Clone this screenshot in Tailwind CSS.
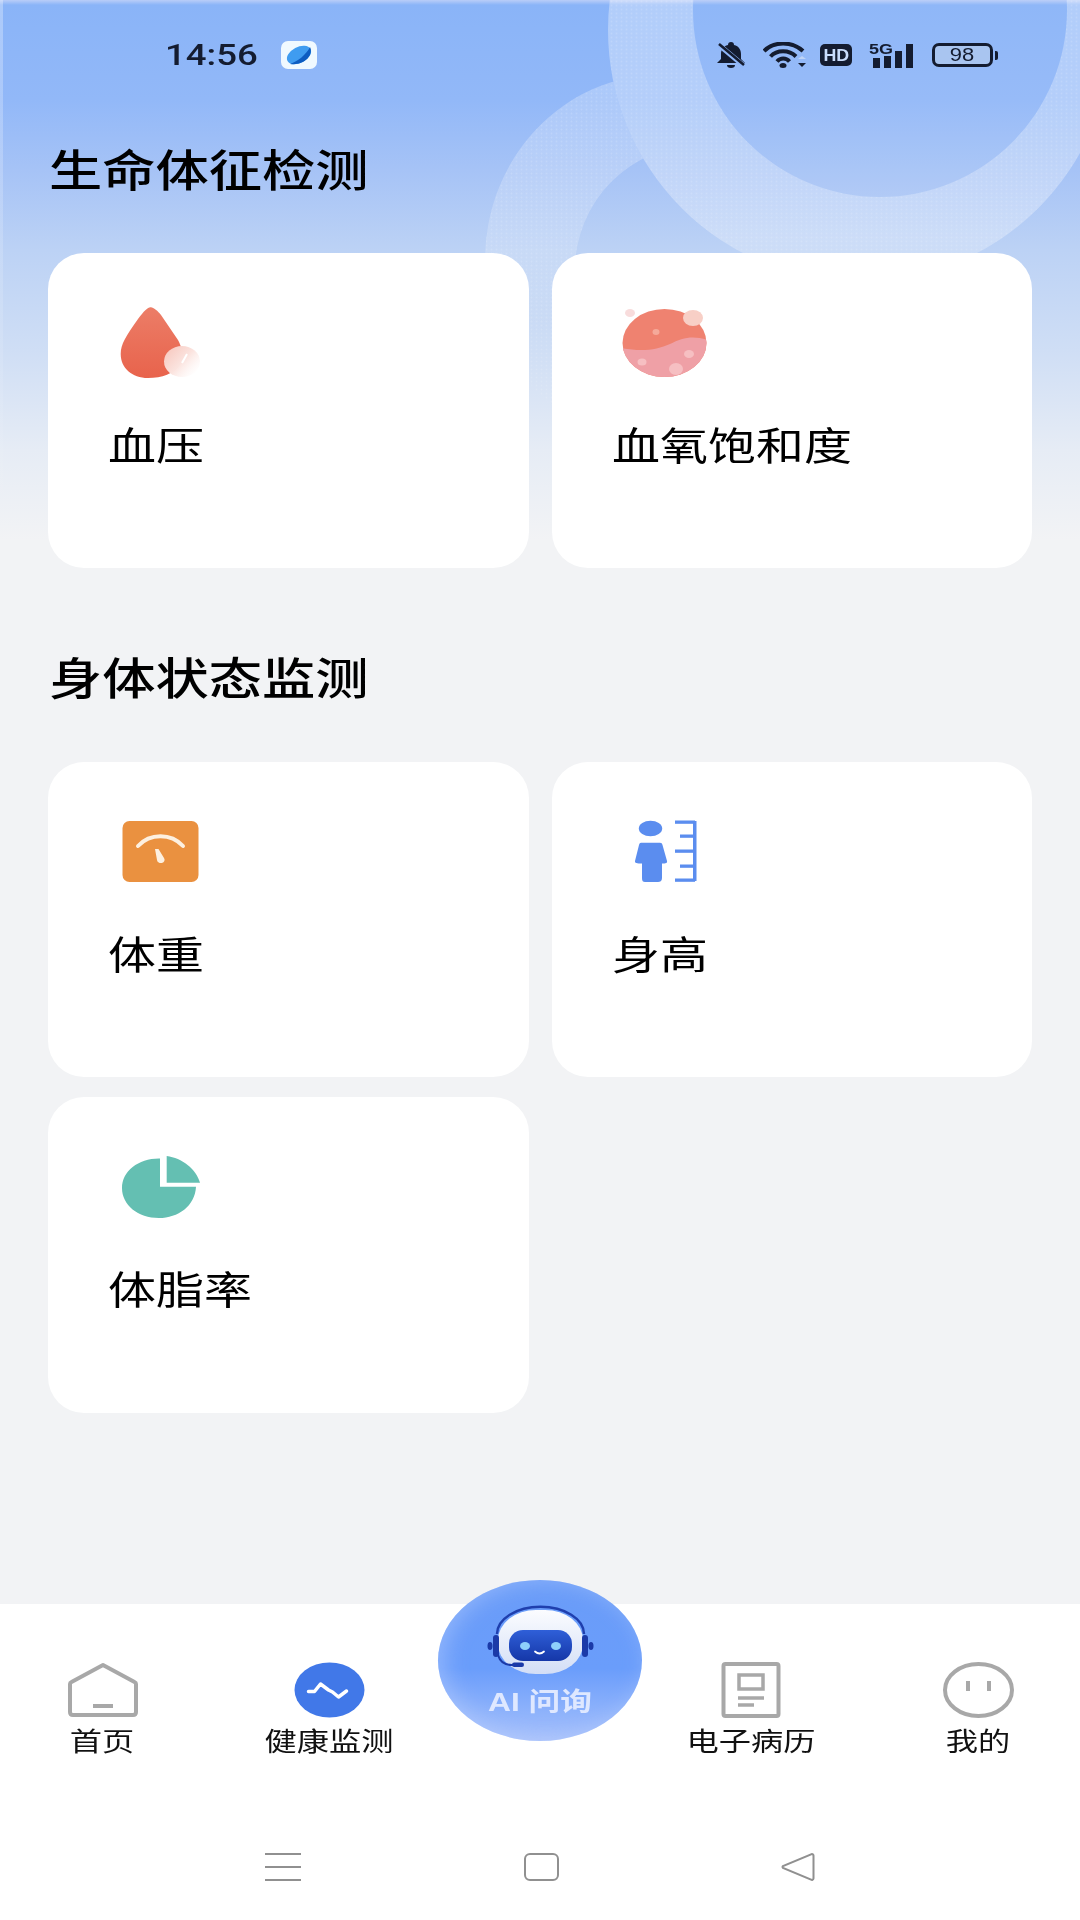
<!DOCTYPE html>
<html lang="zh">
<head>
<meta charset="utf-8">
<script src="https://cdn.jsdelivr.net/npm/@tailwindcss/browser@4"></script>
</head>
<body class="m-0">
<div class="relative w-[1080px] h-[1920px] overflow-hidden flex flex-col bg-[linear-gradient(180deg,#b9cdf8_0,#8ab4f8_5px,#92b8f8_100px,#a6c3f6_170px,#bcd2f5_250px,#cfdef5_350px,#e6ecf5_450px,#f2f3f5_540px)] font-['Noto_Sans_CJK_SC','Noto_Sans',sans-serif] text-black">

  <div class="absolute left-0 top-0 w-[3px] h-[540px] bg-linear-to-b from-white/30 to-white/0"></div>

  <!-- decorative rings -->
  <svg class="absolute left-0 top-0 pointer-events-none" width="1080" height="560" viewBox="0 0 1080 560">
    <defs>
      <mask id="m2"><rect width="1080" height="560" fill="#fff"/><circle cx="860" cy="30" r="252" fill="#000"/></mask>
      <pattern id="dots" width="5" height="4" patternUnits="userSpaceOnUse"><circle cx="1.500" cy="1.500" r=".9" fill="#fff" fill-opacity=".14"/></pattern>
      <linearGradient id="ringfade" gradientUnits="userSpaceOnUse" x1="0" y1="0" x2="0" y2="340"><stop offset="0" stop-color="#fff" stop-opacity=".34"/><stop offset=".7" stop-color="#fff" stop-opacity=".28"/><stop offset="1" stop-color="#fff" stop-opacity="0"/></linearGradient>
      <linearGradient id="ringfade2" gradientUnits="userSpaceOnUse" x1="0" y1="70" x2="0" y2="330"><stop offset="0" stop-color="#fff" stop-opacity=".26"/><stop offset=".7" stop-color="#fff" stop-opacity=".18"/><stop offset="1" stop-color="#fff" stop-opacity="0"/></linearGradient>
    </defs>
    <g mask="url(#m2)">
      <path fill-rule="evenodd" fill="url(#ringfade2)" d="M485 260a175 185 0 1 0 350 0a175 185 0 1 0 -350 0Z M575 270a125 125 0 1 0 250 0a125 125 0 1 0 -250 0Z"/>
      <path fill-rule="evenodd" fill="url(#dots)" d="M485 260a175 185 0 1 0 350 0a175 185 0 1 0 -350 0Z M575 270a125 125 0 1 0 250 0a125 125 0 1 0 -250 0Z"/>
    </g>
    <path fill-rule="evenodd" fill="url(#ringfade)" d="M608 30a252 252 0 1 0 504 0a252 252 0 1 0 -504 0Z M693 10a187 187 0 1 0 374 0a187 187 0 1 0 -374 0Z"/>
    <path fill-rule="evenodd" fill="url(#dots)" d="M608 30a252 252 0 1 0 504 0a252 252 0 1 0 -504 0Z M693 10a187 187 0 1 0 374 0a187 187 0 1 0 -374 0Z"/>
    <path fill="#fff" fill-opacity=".05" d="M693 10a187 187 0 1 0 374 0a187 187 0 1 0 -374 0Z"/>
  </svg>

  <!-- status bar -->
  <div class="relative flex items-center h-[110px] pl-[165px] pr-[82px] text-[#141c30]">
    <span class="font-['Roboto',sans-serif] font-medium text-[30px] leading-none origin-left scale-x-[1.22] w-[116px]">14:56</span>
    <svg width="36" height="28" viewBox="0 0 36 28">
      <rect width="36" height="28" rx="7" fill="#f0f9ff"/>
      <ellipse cx="18" cy="14" rx="13" ry="8" fill="#3f9cf0" transform="rotate(-28 18 14)"/>
      <path d="M9 23C17 20 25 14 29 6C33 14 23 25 9 23Z" fill="#0d5cc0"/>
    </svg>
    <div class="flex-1"></div>
    <svg width="30" height="26" viewBox="0 0 30 26" class="mr-[17px]">
      <path d="M15 0c2 0 3 1 3 3c5 1 7 5 7 9v5l4 4H1l4-4v-5c0-4 2-8 7-9c0-2 1-3 3-3Z" fill="#141c30"/>
      <path d="M11 23h8a4 3 0 0 1-8 0Z" fill="#141c30"/>
      <path d="M3 3L28 24" stroke="#8fb6f8" stroke-width="5"/>
      <path d="M3 2L28 23" stroke="#141c30" stroke-width="2.600"/>
    </svg>
    <svg width="44" height="26" viewBox="0 0 44 26" class="mr-[13px]" fill="none" stroke="#141c30" stroke-width="4">
      <path d="M1 9C11 -1 29 -1 40 9"/>
      <path d="M7.500 14.500C14 7.500 26 7.500 33 14.500"/>
      <path d="M14 19.500C17.500 15.500 23 15.500 26.500 19.500"/>
      <ellipse cx="20" cy="23.500" rx="3.500" ry="2.500" fill="#141c30" stroke="none"/>
      <path d="M35 17l4-3l4 3Z" fill="#c0d4f5" stroke="none"/>
      <path d="M35 21h8l-4 4Z" fill="#141c30" stroke="none"/>
    </svg>
    <span class="flex items-center justify-center w-[32px] h-[22px] rounded-[5px] bg-[#141c30] text-[#c9dcfb] font-['Liberation_Sans',sans-serif] font-bold text-[17px] leading-none mr-[17px]"><span class="scale-x-[1.05]">HD</span></span>
    <div class="relative w-[46px] h-[25px] mr-[17px] flex items-end gap-[4px] pl-[4px]">
      <span class="absolute left-0 top-[-2px] font-['Liberation_Sans',sans-serif] font-bold text-[15px] leading-none origin-left scale-x-[1.2]">5G</span>
      <span class="w-[7px] h-[10px] bg-[#141c30]"></span>
      <span class="w-[7px] h-[12px] bg-[#141c30]"></span>
      <span class="w-[7px] h-[17px] bg-[#141c30]"></span>
      <span class="w-[7px] h-[24px] bg-[#141c30]"></span>
    </div>
    <div class="flex items-center gap-[2px]">
      <span class="flex items-center justify-center w-[61px] h-[24px] rounded-[7px] border-[3px] border-[#141c30] bg-[#a9c5f0] font-['Liberation_Sans',sans-serif] text-[18px] leading-none"><span class="scale-x-[1.22]">98</span></span>
      <span class="w-[3px] h-[9px] bg-[#141c30] rounded-r-[2px]"></span>
    </div>
  </div>

  <!-- content -->
  <main class="relative flex-1 px-[48px]">
    <h2 class="mt-[26px] mb-[53px] ml-[1px] text-[44px] leading-[64px] font-medium origin-left scale-x-[1.21]">生命体征检测</h2>
    <div class="grid grid-cols-[481px_480px] gap-x-[23px]">
      <div class="h-[315px] rounded-[36px] bg-white pl-[60px] pt-[49px]">
        <svg class="block" width="110" height="80" viewBox="0 0 110 80">
          <defs>
            <linearGradient id="drop" x1="0" y1="0" x2="0" y2="1"><stop offset="0" stop-color="#ec7d67"/><stop offset="1" stop-color="#e8634c"/></linearGradient>
            <linearGradient id="bub" x1="0" y1="0" x2="1" y2=".8"><stop offset="0" stop-color="#f7c4ba"/><stop offset=".55" stop-color="#fbe3de"/><stop offset="1" stop-color="#fff" stop-opacity=".4"/></linearGradient>
          </defs>
          <path d="M42.700 5.300C45 5 50 9 53 13L70 38C74 45 76 55 72 62C66 72 54 76 40 76C24 76 12.700 66 12.700 52C12.700 42 18 34 30 17C36 9 40 5 42.700 5.300Z" fill="url(#drop)"/>
          <ellipse cx="74" cy="59.500" rx="18" ry="15.500" fill="url(#bub)"/>
          <path d="M74 61l5-9" stroke="#fff" stroke-width="2"/>
        </svg>
        <div class="mt-[33px] text-[39px] leading-[56px] origin-left scale-x-[1.23]">血压</div>
      </div>
      <div class="h-[315px] rounded-[36px] bg-white pl-[60px] pt-[49px]">
        <svg class="block" width="110" height="80" viewBox="0 0 110 80">
          <defs><clipPath id="o2c"><ellipse cx="52.500" cy="41" rx="42" ry="34"/></clipPath></defs>
          <ellipse cx="52.500" cy="41" rx="42" ry="34" fill="#ef8270"/>
          <path clip-path="url(#o2c)" d="M8 46C30 50 45 48 58 42C70 36 80 33 96 38V80H8Z" fill="#efa0a6"/>
          <ellipse cx="81" cy="16" rx="10" ry="8" fill="#f8cfc6"/>
          <ellipse cx="18" cy="11" rx="5" ry="4" fill="#f8dcdc"/>
          <ellipse cx="44" cy="30" rx="3.500" ry="3" fill="#f5a99a"/>
          <ellipse cx="30" cy="60" rx="4.500" ry="3.500" fill="#f6bfc2"/>
          <ellipse cx="64" cy="67" rx="7" ry="6" fill="#f6bfc2"/>
          <ellipse cx="77" cy="52" rx="5" ry="4" fill="#f6bfc2"/>
        </svg>
        <div class="mt-[33px] text-[39px] leading-[56px] origin-left scale-x-[1.23]">血氧饱和度</div>
      </div>
    </div>

    <h2 class="mt-[76px] mb-[54px] ml-[1px] text-[44px] leading-[64px] font-medium origin-left scale-x-[1.21]">身体状态监测</h2>
    <div class="grid grid-cols-[481px_480px] gap-x-[23px] gap-y-[20px]">
      <div class="h-[315px] rounded-[36px] bg-white pl-[60px] pt-[49px]">
        <svg class="block" width="110" height="80" viewBox="0 0 110 80">
          <rect x="14.500" y="10" width="76" height="61" rx="7" fill="#ea9140"/>
          <path d="M30 35C42 22 63 22 75 35" fill="none" stroke="#fdf0e0" stroke-width="4" stroke-linecap="round"/>
          <path d="M47 38L50.500 38L56 47A3.800 3.300 0 1 1 49 49Z" fill="#fdf0e0"/>
        </svg>
        <div class="mt-[33px] text-[39px] leading-[56px] origin-left scale-x-[1.23]">体重</div>
      </div>
      <div class="h-[315px] rounded-[36px] bg-white pl-[60px] pt-[49px]">
        <svg class="block" width="110" height="80" viewBox="0 0 110 80" fill="#5b8def">
          <ellipse cx="38.500" cy="17.500" rx="11.700" ry="7.800"/>
          <path d="M29 31.700H48C49.500 31.700 50 32.500 50.500 34L55 50C55.500 52 54 52.500 50 52.500V67C50 70 48 71 46 71H33C31 71 30 70 30 67V52.500C25 52.500 22.500 52 23 50L27 34C27.500 32.500 28 31.700 29 31.700Z"/>
          <rect x="81" y="10" width="3.500" height="60" />
          <rect x="63" y="9.500" width="20" height="3.300"/>
          <rect x="68" y="23.500" width="14" height="3.300"/>
          <rect x="63" y="38.500" width="20" height="3.300"/>
          <rect x="68" y="53.500" width="14" height="3.300"/>
          <rect x="63" y="67.500" width="20" height="3.300"/>
        </svg>
        <div class="mt-[33px] text-[39px] leading-[56px] origin-left scale-x-[1.23]">身高</div>
      </div>
      <div class="h-[316px] rounded-[36px] bg-white pl-[60px] pt-[49px]">
        <svg class="block" width="110" height="80" viewBox="0 0 110 80" fill="#64bfb2">
          <path d="M52 12.500V40.700H88C87 60 70 72 51 72C30 72 14 59 14 42C14 25 31 12 52 12.500Z"/>
          <path d="M58.700 10C74 12 88 23 92 36.700H58.700Z"/>
        </svg>
        <div class="mt-[33px] text-[39px] leading-[56px] origin-left scale-x-[1.23]">体脂率</div>
      </div>
    </div>
  </main>

  <!-- bottom nav -->
  <nav class="relative bg-white h-[316px] shrink-0">
    <div class="grid grid-cols-[204px_250px_172px_250px_204px] pt-[58px] text-[26px] leading-[40px] text-[#111]">
      <div class="flex flex-col items-center gap-[2px]">
        <svg width="72" height="56" viewBox="0 0 72 56" fill="none" stroke="#a8a8a8" stroke-width="4" stroke-linejoin="round"><path d="M37 3L68.500 20C69.500 20.500 70 21 70 22V50C70 52 69 53 67 53H7C5 53 4 52 4 50V22C4 21 4.500 20.500 5.500 20Z"/><path d="M27 44H47"/></svg>
        <span class="scale-x-[1.24]">首页</span>
      </div>
      <div class="flex flex-col items-center gap-[2px]">
        <svg width="72" height="56" viewBox="0 0 72 56"><ellipse cx="36.500" cy="28" rx="35" ry="27.500" fill="#4178e8"/><path d="M15.500 29.500H21.500L27.500 22L35.500 28L39.500 30L45.500 35L53.500 29" fill="none" stroke="#fff" stroke-width="3.500" stroke-linecap="round" stroke-linejoin="round"/></svg>
        <span class="scale-x-[1.24]">健康监测</span>
      </div>
      <div></div>
      <div class="flex flex-col items-center gap-[2px]">
        <svg width="60" height="56" viewBox="0 0 60 56" fill="none" stroke="#a8a8a8"><rect x="2.500" y="2" width="55" height="52" rx="2" stroke-width="4"/><rect x="18" y="13" width="24" height="14" stroke-width="3.500"/><path d="M17 36H43" stroke-width="3.500"/><path d="M17 43H33" stroke-width="3.500"/></svg>
        <span class="scale-x-[1.24]">电子病历</span>
      </div>
      <div class="flex flex-col items-center gap-[2px]">
        <svg width="72" height="56" viewBox="0 0 72 56" fill="none" stroke="#a8a8a8"><ellipse cx="36.500" cy="28" rx="33.500" ry="26" stroke-width="4"/><path d="M26 19V29M47 19V29" stroke-width="4" /></svg>
        <span class="scale-x-[1.24]">我的</span>
      </div>
    </div>
    <!-- system buttons -->
    <div class="absolute left-[265px] top-[249px] w-[550px] h-[28px] flex justify-between items-center">
      <span class="flex flex-col justify-between w-[36px] h-[28px]"><span class="block h-[2px] bg-[#909090]"></span><span class="block h-[2px] bg-[#909090]"></span><span class="block h-[2px] bg-[#909090]"></span></span>
      <span class="block w-[35px] h-[28px] rounded-[6px] border-[2px] border-[#909090]"></span>
      <svg width="34" height="28" viewBox="0 0 34 28"><path d="M32.500 2.500V25.500A1.500 1.500 0 0 1 30 26.500L2 15A1.500 1.500 0 0 1 2 13L30 1.500A1.500 1.500 0 0 1 32.500 2.500Z" fill="none" stroke="#909090" stroke-width="2"/></svg>
    </div>
  </nav>

  <!-- AI button -->
  <div class="absolute left-[438px] top-[1580px] w-[204px] h-[161px] rounded-[50%] bg-[linear-gradient(180deg,#6a9cf8_0,#6a9dfb_55%,#a6c0fb_100%)] shadow-[inset_6px_0_22px_rgba(205,220,255,.4)]">
    <svg class="absolute left-0 top-0" width="204" height="110" viewBox="438 1580 204 110">
      <defs>
        <linearGradient id="face" x1="0" y1="0" x2="0" y2="1"><stop offset="0" stop-color="#2f5fd8"/><stop offset="1" stop-color="#1537a8"/></linearGradient>
        <linearGradient id="head" x1="0" y1="0" x2="0" y2="1"><stop offset="0" stop-color="#fbfcff"/><stop offset="1" stop-color="#d3def6"/></linearGradient>
      </defs>
      <path d="M497 1634A43 27 0 0 1 584 1634" fill="none" stroke="#1f3fae" stroke-width="2.500"/>
      <rect x="498" y="1610" width="85" height="64" rx="38" ry="30" fill="url(#head)"/>
      <rect x="509" y="1630" width="63" height="31" rx="14" fill="url(#face)"/>
      <ellipse cx="525" cy="1646" rx="5" ry="4" fill="#8fd0fb"/>
      <ellipse cx="556" cy="1646" rx="5" ry="4" fill="#8fd0fb"/>
      <path d="M535 1651.500Q539.500 1655.500 544 1651.500" fill="none" stroke="#fff" stroke-width="1.800" stroke-linecap="round"/>
      <rect x="493" y="1635" width="6" height="22" rx="3" fill="#1b3aa8"/>
      <rect x="582" y="1635" width="6" height="22" rx="3" fill="#1b3aa8"/>
      <ellipse cx="490" cy="1646" rx="2.500" ry="4" fill="#1b3aa8"/>
      <ellipse cx="591" cy="1646" rx="2.500" ry="4" fill="#1b3aa8"/>
      <path d="M498 1655C500 1662 505 1665 512 1665H522" fill="none" stroke="#1b3aa8" stroke-width="2" stroke-linecap="round"/>
      <rect x="512" y="1662.500" width="12" height="4.500" rx="2.200" fill="#1b3aa8"/>
    </svg>
    <span class="absolute left-0 right-0 top-[104px] text-center text-[26px] leading-[36px] font-bold text-[#dfe8ff] scale-x-[1.22] font-['Liberation_Sans','Noto_Sans_CJK_SC',sans-serif]">AI 问询</span>
  </div>
</div>
</body>
</html>
